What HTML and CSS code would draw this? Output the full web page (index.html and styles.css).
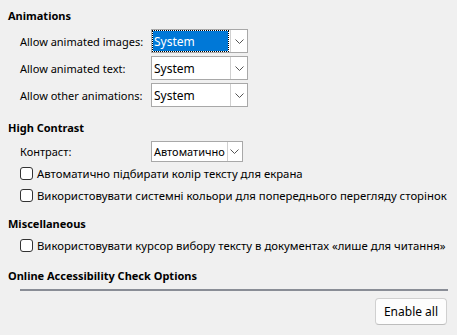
FILE: index.html
```html
<!DOCTYPE html>
<html>
<head>
  <title>Accessibility</title>
  <link rel="stylesheet" href="styles.css">
</head>
<body>
  <div class="page">
    <div class="section">
      <div class="title">Animations</div>
      <div class="rows">
        <div class="row">
          <label class="label">Allow animated images:</label>
          <div class="combo wide">
            <span class="value selected">System</span>
            <span class="arrow"><svg width="9" height="5" viewBox="0 0 9 5"><path d="M0.5 0.5 L4.5 4.5 L8.5 0.5" fill="none" stroke="#555" stroke-width="1"/></svg></span>
          </div>
        </div>
        <div class="row">
          <label class="label">Allow animated text:</label>
          <div class="combo wide">
            <span class="value">System</span>
            <span class="arrow"><svg width="9" height="5" viewBox="0 0 9 5"><path d="M0.5 0.5 L4.5 4.5 L8.5 0.5" fill="none" stroke="#555" stroke-width="1"/></svg></span>
          </div>
        </div>
        <div class="row">
          <label class="label">Allow other animations:</label>
          <div class="combo wide">
            <span class="value">System</span>
            <span class="arrow"><svg width="9" height="5" viewBox="0 0 9 5"><path d="M0.5 0.5 L4.5 4.5 L8.5 0.5" fill="none" stroke="#555" stroke-width="1"/></svg></span>
          </div>
        </div>
      </div>
    </div>

    <div class="section contrast">
      <div class="title">High Contrast</div>
      <div class="row">
        <label class="label">Контраст:</label>
        <div class="combo small">
          <span class="value">Автоматично</span>
          <span class="arrow"><svg width="9" height="5" viewBox="0 0 9 5"><path d="M0.5 0.5 L4.5 4.5 L8.5 0.5" fill="none" stroke="#555" stroke-width="1"/></svg></span>
        </div>
      </div>
      <div class="checks">
        <label class="check"><span class="box"></span>Автоматично підбирати колір тексту для екрана</label>
        <label class="check"><span class="box"></span>Використовувати системні кольори для попереднього перегляду сторінок</label>
      </div>
    </div>

    <div class="section misc">
      <div class="title">Miscellaneous</div>
      <div class="checks">
        <label class="check"><span class="box"></span>Використовувати курсор вибору тексту в документах «лише для читання»</label>
      </div>
    </div>

    <div class="section online">
      <div class="title">Online Accessibility Check Options</div>
      <div class="rule"></div>
      <div class="actions">
        <button class="btn">Enable all</button>
      </div>
    </div>
  </div>
</body>
</html>
```

FILE: styles.css
```css
body {
  margin: 0;
  background-color: #f0f0f0;
  font-family: "Noto Sans", "Open Sans", sans-serif;
  font-size: 11px;
  color: #000;
  white-space: nowrap;
}

.page {
  padding: 6px 9px 0 8px;
}

.title {
  font-weight: bold;
  height: 20px;
  line-height: 20px;
}

.rows {
  display: flex;
  flex-direction: column;
  gap: 3px;
  margin-top: 3px;
}

.row {
  display: flex;
  align-items: center;
}

.label {
  width: 143px;
  padding-left: 12px;
  box-sizing: border-box;
  flex: none;
}

.combo {
  display: flex;
  border: 1px solid #a8a8a8;
  background-color: #fff;
  box-sizing: border-box;
  font-size: 12px;
}

.combo.wide {
  width: 97px;
  height: 24px;
}

.combo.small {
  width: 92px;
  height: 21px;
  font-size: 11px;
}

.value {
  flex: 1;
  display: flex;
  align-items: center;
  padding-left: 1px;
  margin: 1px 2px 1px 1px;
}

.value.selected {
  background-color: #0078d7;
  color: #fff;
  outline: 1px dotted #000;
  outline-offset: 0;
}

.arrow {
  width: 16px;
  display: flex;
  align-items: center;
  justify-content: center;
  border-left: 1px solid #d0d0d0;
}

.contrast {
  margin-top: 11px;
}

.contrast .row {
  margin-top: 3px;
}

.checks {
  display: flex;
  flex-direction: column;
  gap: 8px;
  margin-top: 4px;
}

.check {
  display: flex;
  align-items: center;
  gap: 4px;
  padding-left: 12px;
  height: 14px;
  font-size: 11.35px;
}

.box {
  width: 11px;
  height: 11px;
  border: 1px solid #333;
  border-radius: 3px;
  background-color: #fff;
  flex: none;
}

.misc {
  margin-top: 12px;
}

.misc .checks {
  margin-top: 4px;
}

.online {
  margin-top: 14px;
}

.rule {
  margin: 3px 0 0 12px;
  height: 2px;
  background-color: #898d96;
}

.actions {
  display: flex;
  justify-content: flex-end;
  margin-top: 7px;
}

.btn {
  width: 72px;
  height: 27px;
  margin-right: 1px;
  background-color: #fdfdfd;
  border: 1px solid #d0d0d0;
  border-bottom-color: #bdbdbd;
  border-radius: 4px;
  font-family: inherit;
  font-size: 12px;
  color: #000;
}
```
